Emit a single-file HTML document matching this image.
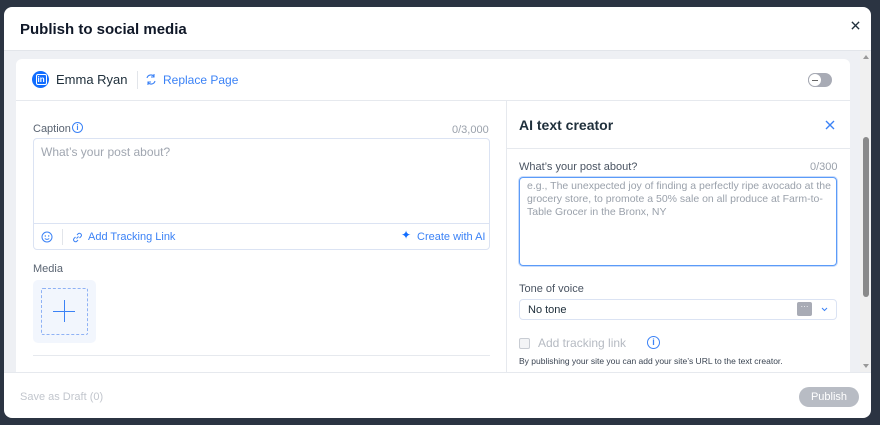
<!DOCTYPE html>
<html><head><style>
*{box-sizing:border-box;margin:0;padding:0}
body{width:880px;height:425px;background:#2b3442;font-family:"Liberation Sans",sans-serif;position:relative;overflow:hidden;color:#20303c}
.modal{position:absolute;left:4px;top:7px;width:867px;height:411px;background:#fff;border-radius:8px;overflow:hidden}
.hdr{position:absolute;left:0;top:0;width:867px;height:44px;border-bottom:1px solid #e2e5ea}
.hdr h1{position:absolute;left:16px;top:14px;font-size:15px;font-weight:bold;color:#101828}
.body{position:absolute;left:0;top:44px;width:856px;height:321px;background:#eef0f4}
.sb{position:absolute;left:856px;top:44px;width:11px;height:321px;background:#f0f0f0}
.card{position:absolute;left:12px;top:8px;width:834px;height:313px;background:#fff;border-radius:6px 6px 0 0}
.row1{position:absolute;left:0;top:0;width:834px;height:42px;border-bottom:1px solid #e6e9ee}
.ftr{position:absolute;left:0;top:365px;width:867px;height:46px;border-top:1px solid #e6e9ee}
.t{position:absolute;white-space:nowrap}
</style></head><body>
<div class="modal">
 <div class="hdr"><h1>Publish to social media</h1>
  <svg style="position:absolute;left:847px;top:14px" width="9" height="9" viewBox="0 0 10 10"><path d="M1 1L9 9M9 1L1 9" stroke="#20303c" stroke-width="1.5"/></svg>
 </div>
 <div class="body">
  <div class="card">
   <div class="row1">
    <div style="position:absolute;left:16px;top:12px;width:17px;height:17px;border-radius:50%;background:#116dff"></div>
    <div class="t" style="left:19.5px;top:15px;font-size:8px;font-weight:bold;color:#fff;border:1.2px solid #fff;border-radius:2px;padding:0 1px;line-height:9px">in</div>
    <div class="t" style="left:40px;top:13px;font-size:13px;color:#20303c">Emma Ryan</div>
    <div style="position:absolute;left:121px;top:12px;width:1px;height:18px;background:#e2e5ea"></div>
    <svg style="position:absolute;left:129px;top:14px" width="12" height="13" viewBox="0 0 12 13"><path d="M2 5A4 4 0 0 1 9 3.5M10 8A4 4 0 0 1 3 9.5M9 1v3h-3M3 12v-3h3" stroke="#3b82f6" stroke-width="1.1" fill="none"/></svg>
    <div class="t" style="left:147px;top:14px;font-size:12px;color:#3b82f6">Replace Page</div>
    <div style="position:absolute;left:792px;top:14px;width:24px;height:14px;border-radius:7px;background:#a8abb5"></div>
    <div style="position:absolute;left:792px;top:14px;width:14px;height:14px;border-radius:50%;background:#fff;border:1px solid #a8abb5"></div>
    <div style="position:absolute;left:796px;top:20.5px;width:6px;height:1.2px;background:#666"></div>
   </div>
   <div class="t" style="left:17px;top:64px;font-size:11px;color:#5a6472">Caption</div>
   <div class="t" style="left:56px;top:63px;width:11px;height:11px;border:1px solid #3b82f6;border-radius:50%;font-size:8px;color:#3b82f6;text-align:center;line-height:9px;font-weight:bold">i</div>
   <div class="t" style="left:436px;top:65px;font-size:11px;color:#9aa1ab">0/3,000</div>
   <div style="position:absolute;left:17px;top:79px;width:457px;height:112px;border:1px solid #dbe3f3;border-radius:4px">
    <div class="t" style="left:7px;top:6px;font-size:12px;color:#a0a6b0">What’s your post about?</div>
    <div style="position:absolute;left:0;top:84px;width:455px;height:1px;background:#dbe3f3"></div>
    <svg style="position:absolute;left:7px;top:92px" width="12" height="12" viewBox="0 0 12 12"><circle cx="6" cy="6" r="5" stroke="#3b82f6" fill="none"/><circle cx="4.3" cy="5" r=".7" fill="#3b82f6"/><circle cx="7.7" cy="5" r=".7" fill="#3b82f6"/><path d="M3.8 7.5Q6 9.3 8.2 7.5" stroke="#3b82f6" fill="none"/></svg>
    <div style="position:absolute;left:28px;top:90px;width:1px;height:16px;background:#e2e5ea"></div>
    <svg style="position:absolute;left:38px;top:93px" width="11" height="11" viewBox="0 0 11 11"><path d="M4.5 6.5l2-2M3.5 5L2 6.5a2 2 0 0 0 2.8 2.8L6 8M7.5 6L9 4.5A2 2 0 0 0 6.2 1.7L5 3" stroke="#3b82f6" fill="none"/></svg>
    <div class="t" style="left:54px;top:92px;font-size:11px;color:#3b82f6">Add Tracking Link</div>
    <div class="t" style="left:367px;top:89px;font-size:12px;color:#116dff">✦</div>
    <div class="t" style="left:383px;top:92px;font-size:11px;color:#3b82f6">Create with AI</div>
   </div>
   <div class="t" style="left:17px;top:204px;font-size:11px;color:#5a6472">Media</div>
   <div style="position:absolute;left:17px;top:221px;width:63px;height:63px;background:#f2f6fd;border-radius:5px"></div>
   <div style="position:absolute;left:25px;top:229px;width:47px;height:47px;border:1px dashed #8fb2f5;border-radius:2px"></div>
   <div style="position:absolute;left:37px;top:252px;width:22px;height:1.2px;background:#3b82f6"></div>
   <div style="position:absolute;left:47.5px;top:241px;width:1.2px;height:22px;background:#3b82f6"></div>
   <div style="position:absolute;left:17px;top:296px;width:457px;height:1px;background:#e6e9ee"></div>
   <div style="position:absolute;left:490px;top:42px;width:1px;height:271px;background:#e6e9ee"></div>
   <div style="position:absolute;left:491px;top:89px;width:343px;height:1px;background:#e6e9ee"></div>
   <div class="t" style="left:503px;top:58px;font-size:14px;font-weight:bold;color:#20303c">AI text creator</div>
   <svg style="position:absolute;left:809px;top:61px" width="10" height="10" viewBox="0 0 10 10"><path d="M1 1L9 9M9 1L1 9" stroke="#3b82f6" stroke-width="1.4"/></svg>
   <div class="t" style="left:503px;top:102px;font-size:11px;color:#4a5462">What’s your post about?</div>
   <div class="t" style="left:794px;top:102px;font-size:11px;color:#9aa1ab">0/300</div>
   <div style="position:absolute;left:503px;top:118px;width:318px;height:89px;border:1.5px solid #5b9bf8;border-radius:4px;box-shadow:0 0 0 1px #c9dcfb">
    <div style="position:absolute;left:7px;top:2px;width:308px;font-size:10.5px;line-height:13px;color:#9aa1ab">e.g., The unexpected joy of finding a perfectly ripe avocado at the grocery store, to promote a 50% sale on all produce at Farm-to-Table Grocer in the Bronx, NY</div>
   </div>
   <div class="t" style="left:503px;top:224px;font-size:11px;color:#4a5462">Tone of voice</div>
   <div style="position:absolute;left:503px;top:240px;width:318px;height:21px;border:1px solid #dbe3f3;border-radius:4px">
    <div class="t" style="left:8px;top:4px;font-size:11px;color:#20303c">No tone</div>
    <div style="position:absolute;left:277px;top:2px;width:15px;height:14px;background:#a8abb5;border-radius:2px;color:#fff;font-size:8px;text-align:center;line-height:10px">···</div>
    <svg style="position:absolute;left:301px;top:7px" width="7" height="5" viewBox="0 0 7 5"><path d="M1 1l2.5 2.5L6 1" stroke="#3b82f6" fill="none"/></svg>
   </div>
   <div style="position:absolute;left:503px;top:279px;width:11px;height:11px;border:1px solid #c8ccd3;border-radius:2px;background:#f3f4f6"></div>
   <div class="t" style="left:522px;top:277px;font-size:12px;color:#b5bac2">Add tracking link</div>
   <div class="t" style="left:631px;top:277px;width:13px;height:13px;border:1.2px solid #3b82f6;border-radius:50%;font-size:9px;color:#3b82f6;text-align:center;line-height:11px;font-weight:bold">i</div>
   <div class="t" style="left:503px;top:297px;font-size:8.5px;color:#3a4452">By publishing your site you can add your site’s URL to the text creator.</div>
  </div>
 </div>
 <div class="sb">
  <div style="position:absolute;left:3px;top:4px;width:0;height:0;border-left:3px solid transparent;border-right:3px solid transparent;border-bottom:4px solid #999"></div>
  <div style="position:absolute;left:3px;top:86px;width:6px;height:160px;border-radius:3px;background:#8a8a8a"></div>
  <div style="position:absolute;left:3px;top:313px;width:0;height:0;border-left:3px solid transparent;border-right:3px solid transparent;border-top:4px solid #999"></div>
 </div>
 <div class="ftr">
  <div class="t" style="left:16px;top:18px;font-size:11px;color:#c2c6cd">Save as Draft (0)</div>
  <div style="position:absolute;left:795px;top:14px;width:60px;height:20px;border-radius:10px;background:#b8bcc4;color:#fff;font-size:11px;text-align:center;line-height:20px">Publish</div>
 </div>
</div>
</body></html>
